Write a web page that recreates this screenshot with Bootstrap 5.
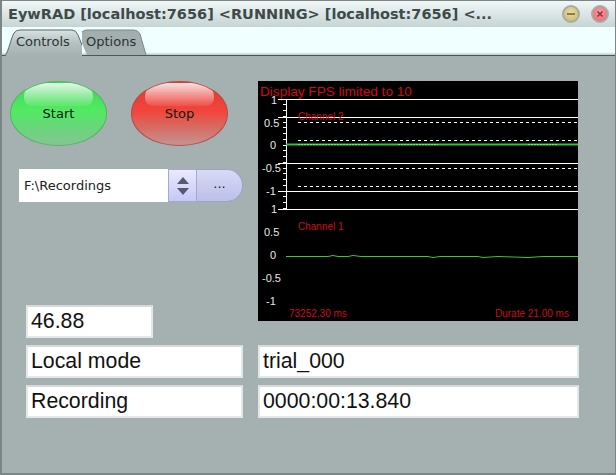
<!DOCTYPE html>
<html lang="en">
  <head>
    <meta charset="UTF-8" />
    <meta name="viewport" content="width=device-width, initial-scale=1.0" />
    <title>EywRAD</title>
    <link
      href="https://cdn.jsdelivr.net/npm/bootstrap@5.3.0/dist/css/bootstrap.min.css"
      rel="stylesheet"
    />
    <style>
      body {
        margin: 0;
        background-color: #a5b0b0;
      }

      .app-window {
        width: 616px;
        height: 475px;
        overflow: hidden;
        background-color: #a5b0b0;
        border: solid #7b8585;
        border-width: 1px 1px 2px 2px;
      }

      .title-bar {
        height: 26px;
        margin-left: -2px;
        padding-left: 8px;
        background: linear-gradient(#f1f7f7, #c6d4d4);
        color: #3f4a4a;
        font: bold 14.5px "DejaVu Sans", sans-serif;
        white-space: nowrap;
      }

      .win-dot {
        width: 18px;
        height: 18px;
        border-radius: 50%;
        border: 2px solid #a9aca4;
      }

      .win-min {
        background: radial-gradient(circle at 50% 40%, #e8dca0, #c6b56d);
        margin-right: 11px;
      }

      .win-close {
        background: radial-gradient(circle at 50% 40%, #f9a0a4, #e8606a);
        margin-right: 6px;
      }

      .tab-strip {
        height: 29px;
        margin-left: -2px;
        padding-left: 5px;
        background: linear-gradient(#f0ffff 90%, #b9c6c6);
        border-bottom: 1px solid #4c5555;
        --bs-nav-tabs-border-width: 0;
        --bs-nav-link-padding-x: 0;
        --bs-nav-link-padding-y: 0;
      }

      .tab-item {
        position: relative;
        height: 28px;
        margin-top: 1px;
        color: #2c3333;
        font: 13px "DejaVu Sans", sans-serif;
      }

      .tab-item svg {
        position: absolute;
        left: 0;
        top: 0;
      }

      .tab-item span {
        position: relative;
        display: block;
        padding-top: 6px;
      }

      .tab-first {
        width: 77px;
      }

      .tab-first span {
        padding-left: 11px;
      }

      .tab-second {
        width: 66px;
      }

      .tab-second span {
        padding-left: 4px;
      }

      .control-pane {
        padding: 25px 0 0 8px;
      }

      .left-side {
        width: 248px;
      }

      .gloss-btn {
        position: relative;
        width: 97px;
        height: 65px;
        padding: 0;
        color: #0c1a10;
        font: 13px "DejaVu Sans", sans-serif;
        border-radius: 48px / 32px;
        overflow: hidden;
      }

      .gloss-btn::before {
        content: "";
        position: absolute;
        left: 13px;
        right: 13px;
        top: 1px;
        height: 23px;
        border-radius: 14px 14px 8px 8px;
        background: linear-gradient(rgba(255, 255, 255, 0.85), rgba(255, 255, 255, 0.08));
      }

      .gloss-btn span {
        position: relative;
      }

      .gloss-green {
        background: linear-gradient(#3fd455 0, #52ea62 45%, #66d878 70%, #86c492 100%);
        border: 1px solid #4fb862;
      }

      .gloss-red {
        background: linear-gradient(#e03a32 0, #f2443a 45%, #d9685f 70%, #c49490 100%);
        border: 1px solid #b84a48;
      }

      .path-combo {
        width: 224px;
        height: 33px;
        margin: 23px 0 0 9px;
      }

      .path-text {
        width: 149px;
        padding-left: 5px;
        background-color: #fff;
        color: #222;
        font: 13px/33px "DejaVu Sans", sans-serif;
      }

      .spin-btn {
        width: 29px;
        background: linear-gradient(#e9e9ff, #c6c8f6);
        border: 1px solid #a5a9cc;
      }

      .dots-btn {
        flex: 1;
        padding: 0 0 4px;
        background: linear-gradient(#d8daf6, #bcbfe8);
        border: 1px solid #9ea2c6;
        border-left: 0;
        border-radius: 0 16px 16px 0;
        color: #222;
        font: 13px "DejaVu Sans", sans-serif;
      }

      .value-box.form-control {
        height: 33px;
        padding: 0 3px;
        background-color: #fff;
        border: 2px solid #e4e7e7;
        border-top-color: #d5d9d9;
        border-radius: 0;
        color: #111;
        font: 21.3px/29px "Liberation Sans", sans-serif;
      }

      .box-short.form-control {
        width: 127px;
        margin: 103px 0 7px 16px;
      }

      .box-wide.form-control {
        width: 217px;
        margin: 0 0 7px 16px;
      }

      .box-right.form-control {
        width: 321px;
        margin-bottom: 7px;
      }

      .scope-view {
        display: block;
        width: 320px;
        height: 240px;
        margin-bottom: 24px;
        background-color: #000;
      }

      .scope-axis {
        fill: #e8e8e8;
        font: 11px "Liberation Sans", sans-serif;
      }

      .scope-red {
        fill: #cf0a1c;
        font: 10px "Liberation Sans", sans-serif;
      }

      .scope-head {
        font-size: 13.6px;
      }
    </style>
  </head>
  <body>
    <div class="app-window">
      <div class="title-bar d-flex align-items-center">
        <span class="flex-grow-1">EywRAD [localhost:7656] &lt;RUNNING&gt; [localhost:7656] &lt;...</span>
        <div class="win-dot win-min d-flex align-items-center justify-content-center">
          <svg width="10" height="10" viewBox="0 0 10 10"><rect x="1" y="4" width="8" height="2" fill="#8a7c45" /></svg>
        </div>
        <div class="win-dot win-close d-flex align-items-center justify-content-center">
          <svg width="10" height="10" viewBox="0 0 10 10"><path d="M2.5 2.5l5 5M7.5 2.5l-5 5" stroke="#94323c" stroke-width="1.7" /></svg>
        </div>
      </div>

      <ul class="nav tab-strip">
        <li class="tab-item tab-first">
          <svg width="77" height="28" viewBox="0 0 77 28">
            <defs>
              <linearGradient id="tabOn" x1="0" y1="0" x2="0" y2="1">
                <stop offset="0" stop-color="#d8e2e2" />
                <stop offset="0.5" stop-color="#b5c0c0" />
                <stop offset="1" stop-color="#a5b0b0" />
              </linearGradient>
            </defs>
            <path d="M0 28C4 22 6 10 9 5Q11 2 15 2H67Q71 2 73 7L81 28Z" fill="url(#tabOn)" />
            <path d="M0 28C4 22 6 10 9 5Q11 2 15 2H67Q71 2 73 7L77 17" fill="none" stroke="#5d6767" />
            <path d="M77 17L81 27" fill="none" stroke="#4c5555" />
          </svg>
          <span>Controls</span>
        </li>
        <li class="tab-item tab-second">
          <svg width="66" height="28" viewBox="0 0 66 28">
            <path d="M0 4Q2 2 5 2H52Q56 2 58 6L64 27H5L0 15Z" fill="#a3aeae" />
            <path d="M0 4Q2 2 5 2H52Q56 2 58 6L64 27" fill="none" stroke="#7d8888" />
          </svg>
          <span>Options</span>
        </li>
      </ul>

      <div class="control-pane d-flex">
        <div class="left-side">
          <div class="d-flex gap-4">
            <button type="button" class="btn gloss-btn gloss-green"><span>Start</span></button>
            <button type="button" class="btn gloss-btn gloss-red"><span>Stop</span></button>
          </div>

          <div class="path-combo d-flex">
            <div class="path-text">F:\Recordings</div>
            <div class="spin-btn d-flex align-items-center justify-content-center">
              <svg width="14" height="22" viewBox="0 0 14 22">
                <path d="M7 2L13 9H1ZM7 20L1 13H13Z" fill="#525a6e" />
              </svg>
            </div>
            <button type="button" class="dots-btn">...</button>
          </div>

          <div class="value-box box-short form-control">46.88</div>
          <div class="value-box box-wide form-control">Local mode</div>
          <div class="value-box box-wide form-control">Recording</div>
        </div>

        <div>
          <svg class="scope-view" viewBox="0 0 320 240">
            <g stroke="#fff" fill="none">
              <path d="M20 18.500H320M20 36.500H320M20 82.500H320M20 110.500H320M20 128.500H320" />
              <path d="M28.500 18V128" />
              <path d="M40 41.500H320M40 59.500H320M40 87.500H320M40 105.500H320" stroke-dasharray="3 3" />
              <path id="scopeTicks" d="" />
            </g>
            <path d="M28 63.500H320" stroke="#2fc62f" stroke-width="2" />
            <path d="M40 63.500H110M140 63.500H180M270 63.500H300" stroke="#b6f0b6" stroke-width="1" stroke-dasharray="2 1" opacity="0.6" />
            <path d="M28 175.500H70L75 174.500L80 175.500H90L95 174.500L103 175.500H170L175 176.500L182 175.500H220L225 176.500L240 175.500L270 176.500L285 175.500H320" stroke="#38c838" fill="none" />

            <g class="scope-axis">
              <text x="13" y="23">1</text>
              <text x="6" y="46">0.5</text>
              <text x="12" y="68">0</text>
              <text x="4" y="91">-0.5</text>
              <text x="8" y="114">-1</text>
              <text x="13" y="132">1</text>
              <text x="6" y="155">0.5</text>
              <text x="12" y="178">0</text>
              <text x="4" y="201">-0.5</text>
              <text x="8" y="224">-1</text>
            </g>
            <g class="scope-red">
              <text class="scope-head" x="2" y="15">Display FPS limited to 10</text>
              <text x="40" y="39">Channel 2</text>
              <text x="40" y="149">Channel 1</text>
              <text x="31" y="236">73252.30 ms</text>
              <text x="237" y="236">Durate 21.00 ms</text>
            </g>
          </svg>
          <div class="value-box box-right form-control">trial_000</div>
          <div class="value-box box-right form-control">0000:00:13.840</div>
        </div>
      </div>
    </div>
    <script src="https://cdn.jsdelivr.net/npm/bootstrap@5.3.0/dist/js/bootstrap.bundle.min.js"></script>
    <script>
      // minor ticks on the upper plot's axis
      let d = "";
      for (let y = 18; y < 128; y += 5.75) {
        d += "M25 " + (Math.floor(y) + 0.5) + "H28";
      }
      document.getElementById("scopeTicks").setAttribute("d", d);
    </script>
  </body>
</html>
